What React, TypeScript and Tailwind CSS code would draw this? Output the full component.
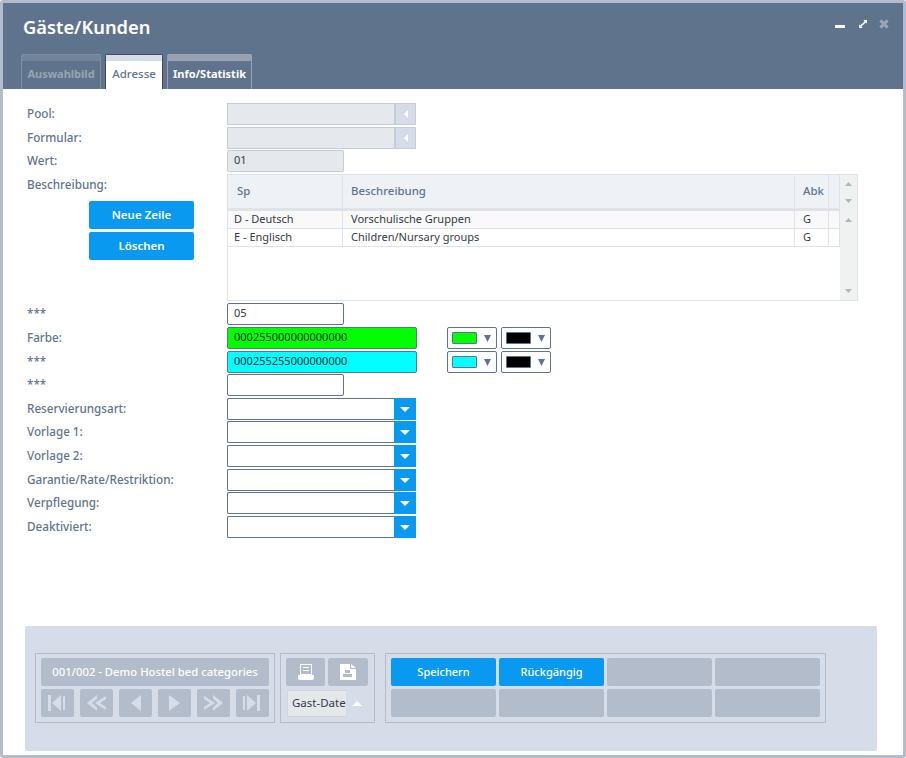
import React from "react";

const Label = ({ children }: { children?: React.ReactNode }) => (
  <div className="w-[200px] shrink-0 text-[11.7px] leading-[21px] font-medium text-[#5f748c]">{children}</div>
);

const Caret = ({ dir, color, w, h }: { dir: "up" | "down" | "left"; color: string; w?: number; h?: number }) => {
  const pts = dir === "up" ? "0,6 5,0 10,6" : dir === "down" ? "0,0 10,0 5,6" : "6,0 6,10 0,5";
  const box = dir === "left" ? "0 0 6 10" : "0 0 10 6";
  return (
    <svg viewBox={box} preserveAspectRatio="none" width={w ?? (dir === "left" ? 6 : 10)} height={h ?? (dir === "left" ? 10 : 6)}>
      <polygon points={pts} fill={color} />
    </svg>
  );
};

const DisabledSelect = ({ mt }: { mt: string }) => (
  <div className={`flex h-[22px] ${mt}`}>
    <Label>{mt === "mt-0" ? "Pool:" : "Formular:"}</Label>
    <div className="h-[22px] w-[169px] border border-[#c5ccd6] border-r-2 bg-[#e5e8ec]" />
    <div className="flex h-[22px] w-[20px] items-center justify-center border border-l-0 border-[#c5ccd6] bg-[#d7dde8]">
      <Caret dir="left" color="#ffffff" w={4} h={8} />
    </div>
  </div>
);

const TextRow = ({ label, value, mt }: { label: string; value?: string; mt: string }) => (
  <div className={`flex h-[22px] ${mt}`}>
    <Label>{label}</Label>
    <div className="h-[22px] w-[117px] rounded-[2px] border border-[#5f748c] bg-white pl-[6px] text-[11px] leading-[18px] text-[#333b45]">
      {value}
    </div>
  </div>
);

const Swatch = ({ color }: { color: string }) => (
  <div className="flex h-[22px] w-[50px] items-center rounded-[2px] border border-[#5f748c] bg-white pl-[4px]">
    <div className="h-[12px] w-[25px] rounded-[1px] border border-[#5f748c]" style={{ backgroundColor: color }} />
    <div className="ml-[7px] flex">
      <Caret dir="down" color="#5f748c" w={7} h={7} />
    </div>
  </div>
);

const ColorRow = ({ label, value, bg, mt }: { label: string; value: string; bg: string; mt: string }) => (
  <div className={`flex h-[22px] ${mt}`}>
    <Label>{label}</Label>
    <div
      className="h-[22px] w-[190px] rounded-[2px] border border-[#5f748c] pl-[6px] text-[11px] leading-[18px] text-[#1f2a33]"
      style={{ backgroundColor: bg }}
    >
      {value}
    </div>
    <div className="ml-[30px] flex gap-[4px]">
      <Swatch color={bg} />
      <Swatch color="#000000" />
    </div>
  </div>
);

const DropRow = ({ label, mt }: { label: string; mt: string }) => (
  <div className={`flex h-[22px] ${mt}`}>
    <Label>{label}</Label>
    <div className="h-[22px] w-[167px] rounded-l-[2px] border border-r-0 border-[#5f748c] bg-white" />
    <div className="flex h-[22px] w-[22px] items-center justify-center bg-[#0a99f0]">
      <Caret dir="down" color="#ffffff" h={5} />
    </div>
  </div>
);

const Gray = ({ children, className }: { children?: React.ReactNode; className: string }) => (
  <div className={`flex items-center justify-center rounded-[2px] bg-[#b3bccb] ${className}`}>{children}</div>
);

const Blue = ({ children }: { children: React.ReactNode }) => (
  <div className="flex h-[28px] w-[105px] items-center justify-center rounded-[2px] bg-[#0a99f0] text-[11px] font-medium text-white">
    {children}
  </div>
);

const navIcons = [
  <><rect x="0" y="0" width="3" height="16" /><polygon points="13,0 13,16 4,8" /><rect x="15" y="1" width="2" height="14" /></>,
  <><polygon points="10,0 10,3.5 5,8 10,12.5 10,16 0,8" /><polygon points="19,1 19,4 13,8 19,12 19,15 8,8" /></>,
  <polygon points="15,0 15,16 5,8" />,
  <polygon points="4,0 4,16 15,8" />,
  <><polygon points="0,1 0,4 6,8 0,12 0,15 11,8" /><polygon points="9,0 9,3.5 14,8 9,12.5 9,16 19,8" /></>,
  <><rect x="0" y="1" width="2" height="14" /><polygon points="4,0 4,16 13,8" /><rect x="14" y="0" width="3" height="16" /></>,
];

const Th = ({ children, className }: { children?: React.ReactNode; className: string }) => (
  <div className={`flex h-full shrink-0 items-center border-r border-[#dfe2e6] pb-[2px] text-[11.4px] font-medium text-[#5f748c] ${className}`}>
    {children}
  </div>
);

const Td = ({ children, className }: { children?: React.ReactNode; className: string }) => (
  <div className={`h-full shrink-0 border-r border-[#dfe2e6] text-[11px] leading-[16px] text-[#333b45] ${className}`}>
    {children}
  </div>
);

export default function App() {
  return (
    <div
      className="flex h-[758px] w-[906px] flex-col overflow-hidden rounded-[3px] border-[3px] border-[#b3bccd] bg-white"
      style={{ fontFamily: '"Noto Sans", sans-serif' }}
    >
      <div className="flex h-[86px] shrink-0 flex-col bg-[#5f748c]">
        <div className="flex h-[51px] items-start justify-between pl-[20px]">
          <div className="mt-[10px] text-[18.3px] leading-[28px] font-semibold text-white">Gäste/Kunden</div>
          <div className="mr-[14px] mt-[16px] flex items-end gap-[14px]">
            <svg width="10" height="3" viewBox="0 0 10 3" className="mb-[1px]"><rect x="0" y="0" width="10" height="3" fill="#fff" /></svg>
            <svg width="8" height="8" viewBox="0 0 10 10" className="mb-[1px]">
              <polygon points="5.5,0 10,0 10,4.5 8.5,3 3,8 4.5,10 0,10 0,5.5 1.5,7 7,2" fill="#fff" />
            </svg>
            <svg width="10" height="10" viewBox="0 0 11 11" className="ml-[-2px]">
              <path d="M1.5 1.5 L9.5 9.5 M9.5 1.5 L1.5 9.5" stroke="#9aa5b5" strokeWidth="3.2" />
            </svg>
          </div>
        </div>
        <div className="flex h-[35px] gap-[4px] pl-[18px]">
          <div className="w-[80px] rounded-t-[2px] border border-b-0 border-[#7f8ea3]">
            <div className="h-[6px] bg-[#71849b]" />
            <div className="text-center text-[11px] leading-[26px] font-bold text-[#99a4b4]">Auswahlbild</div>
          </div>
          <div className="w-[58px] rounded-t-[2px] border border-b-0 border-[#3d4c5e] bg-white">
            <div className="h-[6px] bg-[#d7dde8]" />
            <div className="text-center text-[11.5px] leading-[26px] font-medium text-[#5f748c]">Adresse</div>
          </div>
          <div className="w-[85px] rounded-t-[2px] border border-b-0 border-[#97a3b5]">
            <div className="h-[6px] bg-[#97a3b5]" />
            <div className="text-center text-[11px] leading-[26px] font-bold text-white">Info/Statistik</div>
          </div>
        </div>
      </div>

      <div className="flex min-h-0 flex-1 flex-col pl-[24px] pt-[14px]">
        <DisabledSelect mt="mt-0" />
        <DisabledSelect mt="mt-[2px]" />
        <div className="mt-[1px] flex h-[22px]">
          <Label>Wert:</Label>
          <div className="h-[22px] w-[117px] rounded-[2px] border border-[#c5ccd6] bg-[#e5e8ec] pl-[6px] text-[11px] leading-[18px] text-[#333b45]">01</div>
        </div>

        <div className="mt-[2px] flex h-[127px]">
          <div className="w-[200px] shrink-0">
            <Label>Beschreibung:</Label>
            <div className="ml-[62px] mt-[6px] flex flex-col gap-[3px]">
              <div className="flex h-[28px] w-[105px] items-center justify-center rounded-[2px] bg-[#0a99f0] text-[11.5px] font-semibold text-white">Neue Zeile</div>
              <div className="flex h-[28px] w-[105px] items-center justify-center rounded-[2px] bg-[#0a99f0] text-[11.5px] font-semibold text-white">Löschen</div>
            </div>
          </div>
          <div className="flex h-[127px] w-[631px] border border-[#dfe2e6]">
            <div className="flex w-[612px] flex-col">
              <div className="flex h-[33px] shrink-0 bg-[#eef1f5]">
                <Th className="w-[115px] pl-[9px]">Sp</Th>
                <Th className="w-[452px] pl-[8px]">Beschreibung</Th>
                <Th className="w-[34px] pl-[8px]">Abk</Th>
                <Th className="w-[11px]" />
              </div>
              <div className="h-[3px] shrink-0 bg-[#dfe2e6]" />
              <div className="flex h-[18px] shrink-0 border-b border-[#dfe2e6] bg-[#f9f9f9]">
                <Td className="w-[115px] pl-[6px]">D - Deutsch</Td>
                <Td className="w-[452px] pl-[8px]">Vorschulische Gruppen</Td>
                <Td className="w-[34px] pl-[8px]">G</Td>
                <Td className="w-[11px]" />
              </div>
              <div className="flex h-[18px] shrink-0 border-b border-[#dfe2e6] bg-white">
                <Td className="w-[115px] pl-[6px]">E - Englisch</Td>
                <Td className="w-[452px] pl-[8px]">Children/Nursary groups</Td>
                <Td className="w-[34px] pl-[8px]">G</Td>
                <Td className="w-[11px]" />
              </div>
            </div>
            <div className="flex w-[17px] flex-col items-center bg-[#f0f1f1] pt-[7px]">
              <Caret dir="up" color="#b0b6bd" w={7} h={4} />
              <div className="mt-[13px] flex"><Caret dir="down" color="#b0b6bd" w={7} h={4} /></div>
              <div className="mt-[15px] flex"><Caret dir="up" color="#b0b6bd" w={7} h={4} /></div>
              <div className="mt-[67px] flex"><Caret dir="down" color="#b0b6bd" w={7} h={4} /></div>
            </div>
          </div>
        </div>

        <TextRow label="***" value="05" mt="mt-[2px]" />
        <ColorRow label="Farbe:" value="000255000000000000" bg="#00ff00" mt="mt-[2px]" />
        <ColorRow label="***" value="000255255000000000" bg="#00ffff" mt="mt-[2px]" />
        <TextRow label="***" mt="mt-[1px]" />
        <DropRow label="Reservierungsart:" mt="mt-[2px]" />
        <DropRow label="Vorlage 1:" mt="mt-[1px]" />
        <DropRow label="Vorlage 2:" mt="mt-[2px]" />
        <DropRow label="Garantie/Rate/Restriktion:" mt="mt-[2px]" />
        <DropRow label="Verpflegung:" mt="mt-[1px]" />
        <DropRow label="Deaktiviert:" mt="mt-[2px]" />

        <div className="ml-[-2px] mt-[88px] flex h-[125px] w-[852px] items-start gap-[5px] rounded-[2px] bg-[#d7dde8] pl-[10px] pt-[27px]">
          <div className="flex h-[70px] w-[240px] flex-col gap-[3px] border border-[#b3bccd] px-[5px] pt-[4px]">
            <Gray className="h-[28px] w-[228px] text-[11.3px] font-medium text-white">001/002 - Demo Hostel bed categories</Gray>
            <div className="flex gap-[6px]">
              {navIcons.map((icon, i) => (
                <Gray key={i} className="h-[28px] w-[33px]">
                  <svg width="19" height="16" viewBox="0 0 19 16" fill="#d7dde8">{icon}</svg>
                </Gray>
              ))}
            </div>
          </div>
          <div className="flex h-[70px] w-[95px] flex-col gap-[3px] border border-[#b3bccd] px-[5px] pt-[4px]">
            <div className="flex gap-[3px]">
              <Gray className="h-[28px] w-[39px]">
                <svg width="16" height="16" viewBox="0 0 16 16">
                  <path d="M2 0h12v11H2z M3 1v9h10V1z" fill="#fff" fillRule="evenodd" />
                  <path d="M5 3h6v1H5z M5 6h6v1H5z" fill="#fff" />
                  <path d="M0 11h16v3a2 2 0 0 1-2 2H2a2 2 0 0 1-2-2z" fill="#fff" />
                </svg>
              </Gray>
              <Gray className="h-[28px] w-[40px]">
                <svg width="16" height="16" viewBox="0 0 16 16">
                  <path d="M0 0h10v5h6v11H0z M11 0l5 4h-5z" fill="#fff" fillRule="evenodd" />
                  <path d="M5 6h5v3H5z M3 10h9v3H3z" fill="#b3bccb" />
                </svg>
              </Gray>
            </div>
            <div className="mt-[1px] flex items-center">
              <div className="ml-[1px] h-[27px] w-[59px] overflow-hidden rounded-l-[2px] border border-r-0 border-[#d0d5dc] bg-[#e5e8ea] pl-[4px] text-[11.5px] leading-[23px] whitespace-nowrap text-[#333b45]">Gast-Datei</div>
              <div className="ml-[6px] flex"><Caret dir="up" color="#ffffff" h={5} /></div>
            </div>
          </div>
          <div className="ml-[5px] grid h-[70px] w-[441px] grid-cols-[105px_105px_105px_105px] grid-rows-[28px_28px] gap-[3px] border border-[#b3bccd] px-[5px] pt-[4px]">
            <Blue>Speichern</Blue>
            <Blue>Rückgängig</Blue>
            <Gray className="" />
            <Gray className="" />
            <Gray className="" />
            <Gray className="" />
            <Gray className="" />
            <Gray className="" />
          </div>
        </div>
      </div>
    </div>
  );
}
